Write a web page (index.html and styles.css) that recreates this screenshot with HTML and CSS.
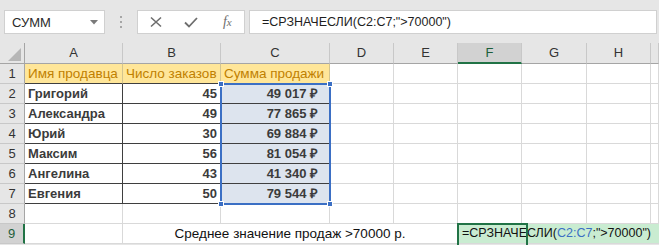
FILE: index.html
```html
<!DOCTYPE html>
<html lang="ru">
<head>
  <meta charset="UTF-8">
  <meta name="viewport" content="width=device-width, initial-scale=1.0">
  <title>СРЗНАЧЕСЛИ</title>
  <link rel="stylesheet" href="styles.css">
</head>
<body>
  <!-- Строка формул -->
  <div class="formula-bar">
    <div class="name-box">
      <span>СУММ</span>
      <svg class="caret" width="8" height="5" viewBox="0 0 8 5"><path d="M0 0h8L4 4.5z" fill="#7a7a7a"/></svg>
    </div>
    <div class="grip">
      <svg width="3" height="14" viewBox="0 0 3 14"><rect x="0" y="1" width="2" height="2" fill="#a6a6a6"/><rect x="0" y="6" width="2" height="2" fill="#a6a6a6"/><rect x="0" y="11" width="2" height="2" fill="#a6a6a6"/></svg>
    </div>
    <div class="fx-box">
      <span class="btn">
        <svg width="12" height="12" viewBox="0 0 12 12"><path d="M1 1.5l10 9M11 1.5l-10 9" stroke="#6e6e6e" stroke-width="1.6" fill="none"/></svg>
      </span>
      <span class="btn">
        <svg width="14" height="11" viewBox="0 0 14 11"><path d="M1 5.5l4 4 8-8.5" stroke="#6e6e6e" stroke-width="1.8" fill="none"/></svg>
      </span>
      <span class="btn fx">f<i>x</i></span>
    </div>
    <div class="input">=СРЗНАЧЕСЛИ(C2:C7;"&gt;70000")</div>
  </div>

  <!-- Лист -->
  <div class="sheet">
    <div class="ch corner"><svg width="14" height="13" viewBox="0 0 14 13"><path d="M13 0v13H0z" fill="#b6b6b6"/></svg></div>
    <div class="ch">A</div><div class="ch">B</div><div class="ch">C</div><div class="ch">D</div>
    <div class="ch">E</div><div class="ch active-col">F</div><div class="ch">G</div><div class="ch">H</div><div class="ch"></div>

    <div class="rh">1</div>
    <div class="c hd">Имя продавца</div><div class="c hd">Число заказов</div><div class="c hd">Сумма продажи</div>
    <div class="c"></div><div class="c"></div><div class="c"></div><div class="c"></div><div class="c"></div><div class="c"></div>

    <div class="rh">2</div>
    <div class="c dt">Григорий</div><div class="c dt num">45</div>
    <div class="c dt num sum picked">49 017 ₽
      <div class="selection"><i class="h tl"></i><i class="h tr"></i><i class="h bl"></i><i class="h br"></i></div>
    </div>
    <div class="c"></div><div class="c"></div><div class="c"></div><div class="c"></div><div class="c"></div><div class="c"></div>

    <div class="rh">3</div>
    <div class="c dt">Александра</div><div class="c dt num">49</div><div class="c dt num sum picked">77 865 ₽</div>
    <div class="c"></div><div class="c"></div><div class="c"></div><div class="c"></div><div class="c"></div><div class="c"></div>

    <div class="rh">4</div>
    <div class="c dt">Юрий</div><div class="c dt num">30</div><div class="c dt num sum picked">69 884 ₽</div>
    <div class="c"></div><div class="c"></div><div class="c"></div><div class="c"></div><div class="c"></div><div class="c"></div>

    <div class="rh">5</div>
    <div class="c dt">Максим</div><div class="c dt num">56</div><div class="c dt num sum picked">81 054 ₽</div>
    <div class="c"></div><div class="c"></div><div class="c"></div><div class="c"></div><div class="c"></div><div class="c"></div>

    <div class="rh">6</div>
    <div class="c dt">Ангелина</div><div class="c dt num">43</div><div class="c dt num sum picked">41 340 ₽</div>
    <div class="c"></div><div class="c"></div><div class="c"></div><div class="c"></div><div class="c"></div><div class="c"></div>

    <div class="rh">7</div>
    <div class="c dt">Евгения</div><div class="c dt num">50</div><div class="c dt num sum picked">79 544 ₽</div>
    <div class="c"></div><div class="c"></div><div class="c"></div><div class="c"></div><div class="c"></div><div class="c"></div>

    <div class="rh">8</div>
    <div class="c"></div><div class="c"></div><div class="c"></div><div class="c"></div><div class="c"></div>
    <div class="c"></div><div class="c"></div><div class="c"></div><div class="c"></div>

    <div class="rh active-row">9</div>
    <div class="c"></div>
    <div class="c label">Среднее значение продаж &gt;70000 р.</div>
    <div class="c editing">=СРЗНАЧЕСЛИ(<span class="ref">C2:C7</span>;"&gt;70000")</div>
  </div>
</body>
</html>
```

FILE: styles.css
```css
* {
  box-sizing: border-box;
}

body {
  margin: 0;
  width: 659px;
  height: 245px;
  overflow: hidden;
  background: #e6e6e6;
  font-family: 'Liberation Sans', Arial, sans-serif;
  color: #222;
}

/* Строка формул */
.formula-bar {
  display: flex;
  align-items: flex-start;
  height: 43px;
  padding: 10px 2px 0 4px;
}

.name-box {
  width: 101px;
  height: 24px;
  background: #fff;
  border: 1px solid #d0d0d0;
  display: flex;
  align-items: center;
  justify-content: space-between;
  padding: 0 6px 0 7px;
  font-size: 13px;
  color: #2a2a2a;
}

.grip {
  width: 32px;
  height: 24px;
  display: flex;
  align-items: center;
  justify-content: center;
}

.fx-box {
  width: 108px;
  height: 24px;
  background: #fff;
  border: 1px solid #d0d0d0;
  display: flex;
}

.fx-box .btn {
  width: 36px;
  display: flex;
  align-items: center;
  justify-content: center;
}

.fx-box .fx {
  font-family: 'Liberation Serif', 'Times New Roman', serif;
  font-style: italic;
  font-size: 14px;
  color: #6e6e6e;
  padding-left: 2px;
}

.fx-box .fx i {
  font-size: 11px;
}

.input {
  flex: 1;
  height: 24px;
  margin-left: 4px;
  background: #fff;
  border: 1px solid #d0d0d0;
  padding-left: 12px;
  line-height: 22px;
  font-size: 12.5px;
  color: #1e1e1e;
  white-space: nowrap;
}

/* Лист */
.sheet {
  display: grid;
  grid-template-columns: 25px 98px 98px 109px 64px 64px 64px 65px 64px minmax(0, 1fr);
  grid-template-rows: 21px;
  grid-auto-rows: 20px;
  background: #fff;
  font-size: 13.5px;
}

.ch {
  background: #e6e6e6;
  border-right: 1px solid #c8c8c8;
  border-bottom: 1px solid #a5a5a5;
  text-align: center;
  line-height: 20px;
  font-size: 13px;
  color: #333;
}

.ch.corner {
  display: flex;
  align-items: flex-end;
  justify-content: flex-end;
  padding: 0 2px 2px 0;
  border-right-color: #a5a5a5;
}

.ch.active-col {
  background: #d2d2d2;
  color: #1d5e3a;
  border-bottom: 2px solid #217346;
}

.rh {
  background: #e6e6e6;
  border-right: 1px solid #a5a5a5;
  border-bottom: 1px solid #c8c8c8;
  text-align: center;
  line-height: 20px;
  font-size: 13px;
  color: #333;
}

.rh.active-row {
  background: #d2d2d2;
  color: #1d5e3a;
  border-right: 2px solid #217346;
}

.c {
  border-right: 1px solid #d9d9d9;
  border-bottom: 1px solid #d9d9d9;
  line-height: 19px;
  padding: 0 3px;
  white-space: nowrap;
}

.c.hd {
  background: #ffe699;
  color: #bf8000;
  border-bottom-color: #3f3f3f;
  border-right-color: #d3c48f;
}

.c.dt {
  font-weight: bold;
  font-size: 13px;
  color: #3b3b3b;
  border-right-color: #3f3f3f;
  border-bottom-color: #3f3f3f;
}

.c.num {
  text-align: right;
}

.c.sum {
  padding-right: 11px;
}

.c.picked {
  position: relative;
  background: #dde4ee;
}

/* Выделение диапазона C2:C7 */
.selection {
  position: absolute;
  left: -1px;
  top: -1px;
  width: 111px;
  height: 122px;
  border: 2px solid #3b6fc4;
  z-index: 2;
}

.selection .h {
  position: absolute;
  width: 6px;
  height: 6px;
  background: #3b6fc4;
  border: 1px solid #fff;
}

.selection .tl { left: -4px; top: -4px; }
.selection .tr { right: -4px; top: -4px; }
.selection .bl { left: -4px; bottom: -4px; }
.selection .br { right: -4px; bottom: -4px; }

/* Строка 9 */
.c.label {
  grid-column: span 4;
  text-align: center;
  color: #111;
}

.c.editing {
  grid-column: span 4;
  position: relative;
  background: #c9ecd1;
  font-size: 12.5px;
  color: #111;
  padding-left: 4px;
  border-right: none;
}

.c.editing::before {
  content: '';
  position: absolute;
  left: -1px;
  top: -1px;
  width: 67px;
  height: 22px;
  border: 2px solid #217346;
}

.ref {
  color: #3b6fc4;
}
```
